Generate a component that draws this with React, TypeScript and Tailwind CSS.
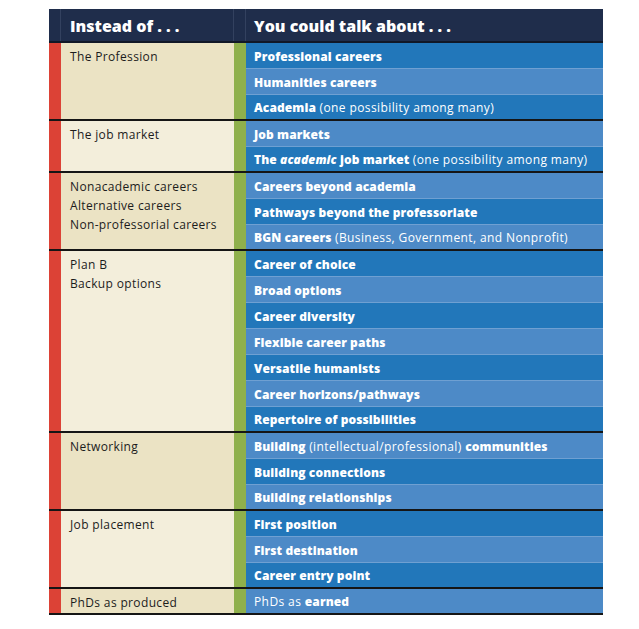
import React from "react";

type Seg = { t: string; b?: boolean; i?: boolean };
type Group = { left: string[]; rows: Seg[][] };

const B = (t: string): Seg => ({ t, b: true });
const N = (t: string): Seg => ({ t });

const groups: Group[] = [
  {
    left: ["The Profession"],
    rows: [
      [B("Professional careers")],
      [B("Humanities careers")],
      [B("Academia"), N(" (one possibility among many)")],
    ],
  },
  {
    left: ["The job market"],
    rows: [
      [B("Job markets")],
      [B("The "), { t: "academic", b: true, i: true }, B(" job market"), N(" (one possibility among many)")],
    ],
  },
  {
    left: ["Nonacademic careers", "Alternative careers", "Non-professorial careers"],
    rows: [
      [B("Careers beyond academia")],
      [B("Pathways beyond the professoriate")],
      [B("BGN careers"), N(" (Business, Government, and Nonprofit)")],
    ],
  },
  {
    left: ["Plan B", "Backup options"],
    rows: [
      [B("Career of choice")],
      [B("Broad options")],
      [B("Career diversity")],
      [B("Flexible career paths")],
      [B("Versatile humanists")],
      [B("Career horizons/pathways")],
      [B("Repertoire of possibilities")],
    ],
  },
  {
    left: ["Networking"],
    rows: [
      [B("Building"), N(" (intellectual/professional) "), B("communities")],
      [B("Building connections")],
      [B("Building relationships")],
    ],
  },
  {
    left: ["Job placement"],
    rows: [[B("First position")], [B("First destination")], [B("Career entry point")]],
  },
  {
    left: ["PhDs as produced"],
    rows: [[N("PhDs as "), B("earned")]],
  },
];

export default function App() {
  let idx = 0;
  return (
    <div className="w-[639px] h-[629px] bg-white pt-[9px] pl-[49px]" style={{ fontFamily: '"Open Sans", "Liberation Sans", sans-serif' }}>
      <div className="w-[554px]">
        {/* header */}
        <div className="flex h-[34px] bg-[#1f2d4b] border-b-2 border-[#111827] text-white">
          <div className="w-[12px] border-r border-[#33415f]" />
          <div className="w-[172px] pl-[9px] pt-[1px] flex items-center text-[16px] font-extrabold">Instead of . . .</div>
          <div className="w-[13px] border-l border-r border-[#33415f]" />
          <div className="flex-1 pl-[8px] pt-[1px] flex items-center text-[16px] font-extrabold">You could talk about . . .</div>
        </div>
        {groups.map((g, gi) => (
          <div key={gi} className="flex border-b-2 border-[#151515]">
            <div className="w-[12px] bg-[#dc4236]" />
            <div
              className={`w-[173px] pl-[9px] pt-[4px] text-[12px] leading-[19px] font-medium tracking-[0.35px] text-[#1c1c1c] ${
                gi % 2 === 0 ? "bg-[#ebe3c4]" : "bg-[#f3eedb]"
              }`}
            >
              {g.left.map((l, li) => (
                <div key={li}>{l}</div>
              ))}
            </div>
            <div className="w-[12px] bg-[#8fb04c]" />
            <div className="flex-1 flex flex-col">
              {g.rows.map((r, ri) => {
                const dark = idx % 2 === 0;
                idx++;
                const last = ri === g.rows.length - 1;
                return (
                  <div
                    key={ri}
                    className={`flex items-center pl-[8px] pt-[2px] text-[12px] text-white whitespace-nowrap ${
                      last ? "h-[24px]" : "h-[26px] border-b border-[#6fa0d2]"
                    } ${dark ? "bg-[#2277ba]" : "bg-[#4d8ac7]"}`}
                  >
                    {r.map((s, si) => (
                      <span
                        key={si}
                        className={`${s.b ? "font-extrabold tracking-[0.1px]" : "font-normal tracking-[0.4px]"} ${s.i ? "italic" : ""}`}
                      >
                        {s.t.replace(/ /g, "\u00a0")}
                      </span>
                    ))}
                  </div>
                );
              })}
            </div>
          </div>
        ))}
      </div>
    </div>
  );
}
